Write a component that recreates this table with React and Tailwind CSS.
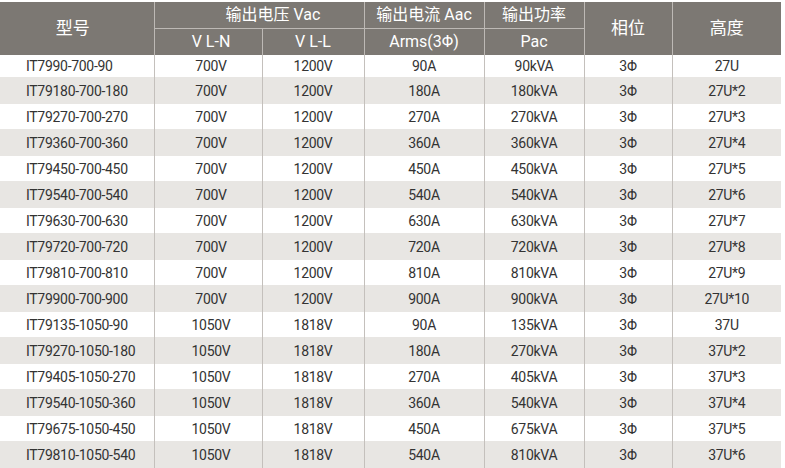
import React from 'react';

const rows = [
  ['IT7990-700-90', '700V', '1200V', '90A', '90kVA', '3Φ', '27U'],
  ['IT79180-700-180', '700V', '1200V', '180A', '180kVA', '3Φ', '27U*2'],
  ['IT79270-700-270', '700V', '1200V', '270A', '270kVA', '3Φ', '27U*3'],
  ['IT79360-700-360', '700V', '1200V', '360A', '360kVA', '3Φ', '27U*4'],
  ['IT79450-700-450', '700V', '1200V', '450A', '450kVA', '3Φ', '27U*5'],
  ['IT79540-700-540', '700V', '1200V', '540A', '540kVA', '3Φ', '27U*6'],
  ['IT79630-700-630', '700V', '1200V', '630A', '630kVA', '3Φ', '27U*7'],
  ['IT79720-700-720', '700V', '1200V', '720A', '720kVA', '3Φ', '27U*8'],
  ['IT79810-700-810', '700V', '1200V', '810A', '810kVA', '3Φ', '27U*9'],
  ['IT79900-700-900', '700V', '1200V', '900A', '900kVA', '3Φ', '27U*10'],
  ['IT79135-1050-90', '1050V', '1818V', '90A', '135kVA', '3Φ', '37U'],
  ['IT79270-1050-180', '1050V', '1818V', '180A', '270kVA', '3Φ', '37U*2'],
  ['IT79405-1050-270', '1050V', '1818V', '270A', '405kVA', '3Φ', '37U*3'],
  ['IT79540-1050-360', '1050V', '1818V', '360A', '540kVA', '3Φ', '37U*4'],
  ['IT79675-1050-450', '1050V', '1818V', '450A', '675kVA', '3Φ', '37U*5'],
  ['IT79810-1050-540', '1050V', '1818V', '540A', '810kVA', '3Φ', '37U*6'],
];

const font = { fontFamily: 'Roboto, "Noto Sans CJK SC", sans-serif' };

export default function App() {
  return (
    <div className="w-[785px] h-[468px] overflow-hidden bg-white pt-[2px]" style={font}>
      <table className="w-[781px] table-fixed border-collapse">
        <colgroup>
          <col className="w-[154px]" />
          <col className="w-[108px]" />
          <col className="w-[102px]" />
          <col className="w-[120px]" />
          <col className="w-[100px]" />
          <col className="w-[88px]" />
          <col className="w-[109px]" />
        </colgroup>
        <thead className="bg-[#7c7873] text-white text-[16px] leading-none">
          <tr className="h-[26px]">
            <th rowSpan={2} className="font-normal text-[17px] pr-[8px] border-r border-[#bdb9b5]">型号</th>
            <th colSpan={2} className="font-normal pl-[28px] border-r border-b border-[#bdb9b5]">输出电压 Vac</th>
            <th className="font-normal border-r border-b border-[#bdb9b5]">输出电流 Aac</th>
            <th className="font-normal border-r border-b border-[#bdb9b5]">输出功率</th>
            <th rowSpan={2} className="font-normal text-[17px] border-r border-[#bdb9b5]">相位</th>
            <th rowSpan={2} className="font-normal text-[17px]">高度</th>
          </tr>
          <tr className="h-[27px]">
            <th className="font-normal border-r border-[#bdb9b5] pl-[6px]">V L-N</th>
            <th className="font-normal border-r border-[#bdb9b5]">V L-L</th>
            <th className="font-normal border-r border-[#bdb9b5]">Arms(3Φ)</th>
            <th className="font-normal border-r border-[#bdb9b5]">Pac</th>
          </tr>
        </thead>
        <tbody className="text-[14px] leading-none text-[#333333] tracking-[-0.3px]">
          {rows.map((r, i) => (
            <tr
              key={r[0]}
              className={
                i === 0 ? 'h-[22px] bg-white' : i % 2 === 1 ? 'h-[27px] bg-[#e8e6e3]' : 'h-[25px] bg-white'
              }
            >
              <td className="pl-[26px] border-r border-[#c4c0bc]">{r[0]}</td>
              <td className="text-center pl-[6px] border-r border-[#c4c0bc]">{r[1]}</td>
              <td className="text-center border-r border-[#c4c0bc]">{r[2]}</td>
              <td className="text-center border-r border-[#c4c0bc]">{r[3]}</td>
              <td className="text-center border-r border-[#c4c0bc]">{r[4]}</td>
              <td className="text-center border-r border-[#c4c0bc]">{r[5]}</td>
              <td className="text-center">{r[6]}</td>
            </tr>
          ))}
        </tbody>
      </table>
    </div>
  );
}
